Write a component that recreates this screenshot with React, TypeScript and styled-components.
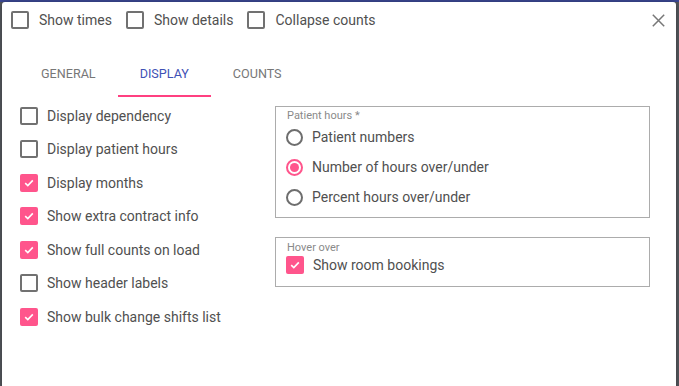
import React from "react";
import styled, { createGlobalStyle } from "styled-components";

const GlobalStyle = createGlobalStyle`
  html, body { margin: 0; padding: 0; }
  body {
    width: 679px;
    height: 386px;
    overflow: hidden;
    font-family: Roboto, "Liberation Sans", Arial, sans-serif;
  }
`;

const Page = styled.div`
  width: 679px;
  height: 386px;
  box-sizing: border-box;
  padding: 2px 3px 0 2px;
  background: linear-gradient(#3d4a98 0 2px, #55585e 2px);
  overflow: hidden;
`;

const Dialog = styled.div`
  width: 674px;
  height: 400px;
  background: #fff;
  border-radius: 3px 3px 0 0;
  box-shadow: 0 0 6px rgba(0, 0, 0, 0.35);
  display: flex;
  flex-direction: column;
`;

const Header = styled.div`
  display: flex;
  align-items: center;
  height: 18px;
  padding: 9px 11px 0 9px;
  gap: 14px;
`;

const CheckLabel = styled.label<{ $gap?: number }>`
  display: flex;
  align-items: center;
  gap: ${(p) => p.$gap ?? 9}px;
  font-size: 14px;
  color: #505050;
  white-space: nowrap;
  cursor: pointer;
`;

const Box = styled.span<{ $checked?: boolean }>`
  width: 18px;
  height: 18px;
  box-sizing: border-box;
  border-radius: 2px;
  flex: none;
  display: flex;
  align-items: center;
  justify-content: center;
  border: ${(p) => (p.$checked ? "none" : "2px solid #717171")};
  background: ${(p) => (p.$checked ? "#ff558c" : "transparent")};
`;

const Spacer = styled.div`
  flex: 1;
`;

const CloseButton = styled.button`
  border: none;
  background: none;
  padding: 0;
  width: 14px;
  height: 14px;
  display: flex;
  align-items: center;
  justify-content: center;
  cursor: pointer;
`;

const TabBar = styled.div`
  display: flex;
  height: 48px;
  margin-top: 20px;
  padding-left: 17px;
`;

const Tab = styled.div<{ $active?: boolean }>`
  height: 48px;
  box-sizing: border-box;
  padding: 2px 22px 0;
  display: flex;
  align-items: center;
  justify-content: center;
  font-size: 12.6px;
  text-transform: uppercase;
  color: ${(p) => (p.$active ? "#3f51b5" : "#777")};
  border-bottom: 2px solid ${(p) => (p.$active ? "#ff4081" : "transparent")};
`;

const Content = styled.div`
  display: flex;
  padding: 2px 26px 0 18px;
`;

const LeftColumn = styled.div`
  width: 255px;
  display: flex;
  flex-direction: column;
`;

const Row = styled.div<{ $h: number }>`
  height: ${(p) => p.$h}px;
  display: flex;
  align-items: center;
`;

const RightColumn = styled.div`
  flex: 1;
  display: flex;
  flex-direction: column;
  gap: 19px;
  padding-top: 7px;
`;

const Group = styled.div<{ $pt: number; $pb: number }>`
  border: 1px solid #acacac;
  padding: ${(p) => p.$pt}px 10px ${(p) => p.$pb}px 10px;
`;

const Legend = styled.div`
  font-size: 11px;
  line-height: 13px;
  color: #8a8a8a;
  padding-left: 1px;
`;

const RadioCircle = styled.span<{ $checked?: boolean }>`
  width: 17px;
  height: 17px;
  box-sizing: border-box;
  border-radius: 50%;
  border: 2px solid ${(p) => (p.$checked ? "#ff558c" : "#6e6e6e")};
  flex: none;
  display: flex;
  align-items: center;
  justify-content: center;
  &::after {
    content: "";
    width: 9px;
    height: 9px;
    border-radius: 50%;
    background: ${(p) => (p.$checked ? "#ff558c" : "transparent")};
  }
`;

const Check = () => (
  <svg width="12" height="12" viewBox="0 0 12 12">
    <path d="M2.2 6.2 L4.8 8.6 L9.8 3.4" fill="none" stroke="#fff" strokeWidth="1.6" />
  </svg>
);

const Checkbox = ({ checked, label, gap }: { checked?: boolean; label: string; gap?: number }) => (
  <CheckLabel $gap={gap}>
    <Box $checked={checked}>{checked && <Check />}</Box>
    {label}
  </CheckLabel>
);

const Radio = ({ checked, label }: { checked?: boolean; label: string }) => (
  <CheckLabel $gap={9}>
    <RadioCircle $checked={checked} />
    {label}
  </CheckLabel>
);

const leftItems: [string, boolean][] = [
  ["Display dependency", false],
  ["Display patient hours", false],
  ["Display months", true],
  ["Show extra contract info", true],
  ["Show full counts on load", true],
  ["Show header labels", false],
  ["Show bulk change shifts list", true],
];

const radios: [string, boolean][] = [
  ["Patient numbers", false],
  ["Number of hours over/under", true],
  ["Percent hours over/under", false],
];

export default function App() {
  return (
    <>
      <GlobalStyle />
      <Page>
        <Dialog>
          <Header>
            <Checkbox label="Show times" gap={10} />
            <Checkbox label="Show details" gap={10} />
            <Checkbox label="Collapse counts" gap={10} />
            <Spacer />
            <CloseButton aria-label="Close">
              <svg width="13" height="13" viewBox="0 0 13 13">
                <path d="M0.8 0.8 L12.2 12.2 M12.2 0.8 L0.8 12.2" stroke="#777" strokeWidth="1.5" fill="none" />
              </svg>
            </CloseButton>
          </Header>
          <TabBar>
            <Tab>General</Tab>
            <Tab $active>Display</Tab>
            <Tab>Counts</Tab>
          </TabBar>
          <Content>
            <LeftColumn>
              {leftItems.map(([l, c]) => (
                <Row key={l} $h={33.5}>
                  <Checkbox label={l} checked={c} />
                </Row>
              ))}
            </LeftColumn>
            <RightColumn>
              <Group $pt={2} $pb={5}>
                <Legend>Patient hours *</Legend>
                {radios.map(([l, c]) => (
                  <Row key={l} $h={30}>
                    <Radio label={l} checked={c} />
                  </Row>
                ))}
              </Group>
              <Group $pt={3} $pb={10}>
                <Legend>Hover over</Legend>
                <Row $h={22}>
                  <Checkbox label="Show room bookings" checked />
                </Row>
              </Group>
            </RightColumn>
          </Content>
        </Dialog>
      </Page>
    </>
  );
}
